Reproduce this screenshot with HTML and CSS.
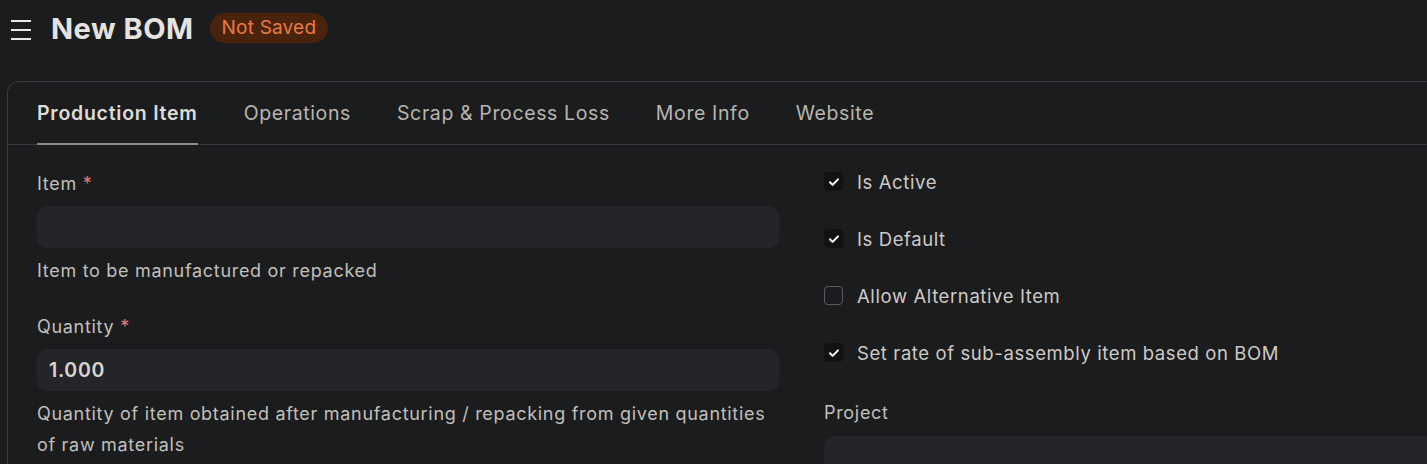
FILE: index.html
```html
<!DOCTYPE html>
<html>
<head>
<meta charset="utf-8">
<link rel="stylesheet" href="styles.css">
</head>
<body>
<header class="page-head">
  <button class="menu-btn" aria-label="menu">
    <svg width="24" height="24" viewBox="0 0 24 24"><path d="M1 4h20M1 13h20M1 22h20" stroke="#e8e8e8" stroke-width="1.8" fill="none"/></svg>
  </button>
  <h1 class="title">New BOM</h1>
  <span class="badge">Not Saved</span>
</header>
<main class="card">
  <nav class="tabs">
    <a class="tab active">Production Item</a>
    <a class="tab">Operations</a>
    <a class="tab">Scrap &amp; Process Loss</a>
    <a class="tab">More Info</a>
    <a class="tab">Website</a>
  </nav>
  <section class="form">
    <div class="col">
      <div class="field">
        <label class="label">Item <span class="req">*</span></label>
        <div class="input"></div>
        <p class="help">Item to be manufactured or repacked</p>
      </div>
      <div class="field">
        <label class="label">Quantity <span class="req">*</span></label>
        <div class="input value">1.000</div>
        <p class="help">Quantity of item obtained after manufacturing / repacking from given quantities of raw materials</p>
      </div>
    </div>
    <div class="col right">
      <div class="check-row"><span class="box checked"><svg width="12" height="12" viewBox="0 0 12 12"><path d="M2 6.3l2.6 2.6L10 3.4" stroke="#fff" stroke-width="2" fill="none" stroke-linecap="round" stroke-linejoin="round"/></svg></span><span class="check-label">Is Active</span></div>
      <div class="check-row"><span class="box checked"><svg width="12" height="12" viewBox="0 0 12 12"><path d="M2 6.3l2.6 2.6L10 3.4" stroke="#fff" stroke-width="2" fill="none" stroke-linecap="round" stroke-linejoin="round"/></svg></span><span class="check-label">Is Default</span></div>
      <div class="check-row"><span class="box"></span><span class="check-label">Allow Alternative Item</span></div>
      <div class="check-row"><span class="box checked"><svg width="12" height="12" viewBox="0 0 12 12"><path d="M2 6.3l2.6 2.6L10 3.4" stroke="#fff" stroke-width="2" fill="none" stroke-linecap="round" stroke-linejoin="round"/></svg></span><span class="check-label">Set rate of sub-assembly item based on BOM</span></div>
      <div class="field project">
        <label class="label">Project</label>
        <div class="input"></div>
      </div>
    </div>
  </section>
</main>
</body>
</html>
```
FILE: styles.css
```css
* { box-sizing: border-box; }
html, body { margin: 0; padding: 0; }
body {
  background: #1b1c1e;
  font-family: Inter, "Noto Sans", sans-serif;
  color: #c7c4bf;
  width: 1427px;
  height: 464px;
  overflow: hidden;
}
.page-head {
  display: flex;
  align-items: center;
  height: 56px;
  padding-left: 10px;
}
.menu-btn {
  background: none;
  border: 0;
  padding: 0;
  width: 24px;
  height: 24px;
  display: flex;
  margin-top: 2px;
}
.title {
  margin: 0 0 0 17px;
  font-size: 29px;
  font-weight: 700;
  color: #e4e3e0;
  letter-spacing: 0.5px;
}
.badge {
  margin-left: 16px;
  height: 30px;
  line-height: 30px;
  padding: 0 12px;
  border-radius: 15px;
  background: #4a230d;
  color: #ea7a40;
  font-size: 19px;
  letter-spacing: 0.2px;
}
.card {
  margin: 25px 0 0 7px;
  width: 1600px;
  border: 1px solid #37383b;
  border-right: 0;
  border-bottom: 0;
  border-radius: 12px 0 0 0;
  background: #1b1c1e;
  min-height: 400px;
}
.tabs {
  display: flex;
  gap: 46px;
  padding: 0 29px;
  height: 63px;
  border-bottom: 1px solid #37383b;
}
.tab {
  display: flex;
  align-items: center;
  font-size: 19.5px;
  letter-spacing: 0.62px;
  color: #b8b5b0;
  border-bottom: 2px solid transparent;
  margin-bottom: -1px;
}
.tab.active {
  color: #dedbd6;
  font-weight: 600;
  letter-spacing: 0.75px;
  border-bottom-color: #8d8a85;
}
.form {
  display: flex;
  gap: 45px;
  padding: 26px 29px 0;
}
.col {
  width: 742px;
  display: flex;
  flex-direction: column;
  letter-spacing: 0.7px;
}
.col.right { margin-top: -2px; }
.field { display: flex; flex-direction: column; }
.field + .field { margin-top: 28px; }
.label {
  font-size: 18px;
  line-height: 25px;
  color: #c2bfba;
}
.req { color: #e2787b; }
.input {
  margin-top: 10px;
  height: 42px;
  border-radius: 10px;
  background: #242528;
  padding: 0 12px;
  display: flex;
  align-items: center;
  font-size: 19.5px;
  font-weight: 600;
  color: #d8d5d0;
}
.help {
  margin: 7px 0 0;
  font-size: 18px;
  line-height: 31px;
  color: #c2bfba;
}
.check-row {
  display: flex;
  align-items: center;
  height: 25px;
  margin-bottom: 32px;
}
.box {
  width: 19px;
  height: 19px;
  border-radius: 4px;
  border: 1px solid #5a5b5f;
  display: flex;
  align-items: center;
  justify-content: center;
  margin-right: 14px;
}
.box.checked {
  background: #111214;
  border-color: #111214;
}
.check-label {
  font-size: 18.5px;
  color: #cdcac5;
  letter-spacing: 0.6px;
}
.project { margin-top: 3px; }
.project .input { margin-top: 11px; }
```
